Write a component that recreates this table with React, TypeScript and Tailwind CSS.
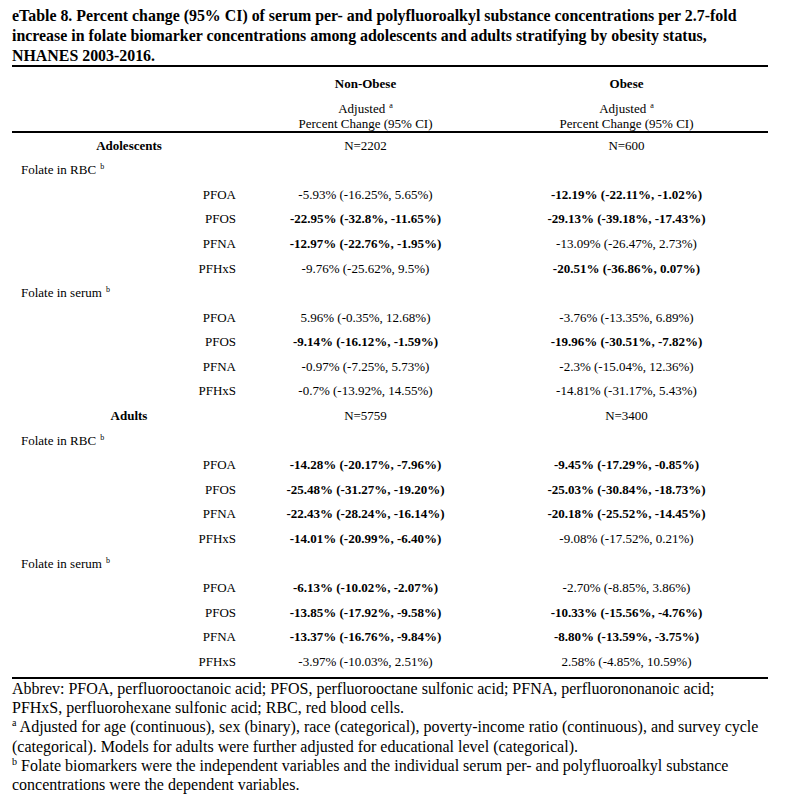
import React from "react";

type Row =
  | { kind: "group"; label: string; n1: string; n2: string }
  | { kind: "sub"; label: string }
  | { kind: "data"; label: string; v1: string; b1: boolean; v2: string; b2: boolean };

const rows: Row[] = [
  { kind: "group", label: "Adolescents", n1: "N=2202", n2: "N=600" },
  { kind: "sub", label: "Folate in RBC" },
  { kind: "data", label: "PFOA", v1: "-5.93% (-16.25%, 5.65%)", b1: false, v2: "-12.19% (-22.11%, -1.02%)", b2: true },
  { kind: "data", label: "PFOS", v1: "-22.95% (-32.8%, -11.65%)", b1: true, v2: "-29.13% (-39.18%, -17.43%)", b2: true },
  { kind: "data", label: "PFNA", v1: "-12.97% (-22.76%, -1.95%)", b1: true, v2: "-13.09% (-26.47%, 2.73%)", b2: false },
  { kind: "data", label: "PFHxS", v1: "-9.76% (-25.62%, 9.5%)", b1: false, v2: "-20.51% (-36.86%, 0.07%)", b2: true },
  { kind: "sub", label: "Folate in serum" },
  { kind: "data", label: "PFOA", v1: "5.96% (-0.35%, 12.68%)", b1: false, v2: "-3.76% (-13.35%, 6.89%)", b2: false },
  { kind: "data", label: "PFOS", v1: "-9.14% (-16.12%, -1.59%)", b1: true, v2: "-19.96% (-30.51%, -7.82%)", b2: true },
  { kind: "data", label: "PFNA", v1: "-0.97% (-7.25%, 5.73%)", b1: false, v2: "-2.3% (-15.04%, 12.36%)", b2: false },
  { kind: "data", label: "PFHxS", v1: "-0.7% (-13.92%, 14.55%)", b1: false, v2: "-14.81% (-31.17%, 5.43%)", b2: false },
  { kind: "group", label: "Adults", n1: "N=5759", n2: "N=3400" },
  { kind: "sub", label: "Folate in RBC" },
  { kind: "data", label: "PFOA", v1: "-14.28% (-20.17%, -7.96%)", b1: true, v2: "-9.45% (-17.29%, -0.85%)", b2: true },
  { kind: "data", label: "PFOS", v1: "-25.48% (-31.27%, -19.20%)", b1: true, v2: "-25.03% (-30.84%, -18.73%)", b2: true },
  { kind: "data", label: "PFNA", v1: "-22.43% (-28.24%, -16.14%)", b1: true, v2: "-20.18% (-25.52%, -14.45%)", b2: true },
  { kind: "data", label: "PFHxS", v1: "-14.01% (-20.99%, -6.40%)", b1: true, v2: "-9.08% (-17.52%, 0.21%)", b2: false },
  { kind: "sub", label: "Folate in serum" },
  { kind: "data", label: "PFOA", v1: "-6.13% (-10.02%, -2.07%)", b1: true, v2: "-2.70% (-8.85%, 3.86%)", b2: false },
  { kind: "data", label: "PFOS", v1: "-13.85% (-17.92%, -9.58%)", b1: true, v2: "-10.33% (-15.56%, -4.76%)", b2: true },
  { kind: "data", label: "PFNA", v1: "-13.37% (-16.76%, -9.84%)", b1: true, v2: "-8.80% (-13.59%, -3.75%)", b2: true },
  { kind: "data", label: "PFHxS", v1: "-3.97% (-10.03%, 2.51%)", b1: false, v2: "2.58% (-4.85%, 10.59%)", b2: false },
];

function TableRow({ row }: { row: Row }) {
  if (row.kind === "group") {
    return (
      <div className="flex h-[24.6px] items-center">
        <div className="w-[234px] text-center font-bold">{row.label}</div>
        <div className="w-[239px] text-center">{row.n1}</div>
        <div className="w-[283px] text-center">{row.n2}</div>
      </div>
    );
  }
  if (row.kind === "sub") {
    return (
      <div className="flex h-[24.6px] items-center">
        <div className="pl-[9px]">
          {row.label}
          <sup className="ml-[4px] text-[8px] relative -top-[5px]">b</sup>
        </div>
      </div>
    );
  }
  return (
    <div className="flex h-[24.6px] items-center">
      <div className="w-[224px] text-right">{row.label}</div>
      <div className="w-[10px]" />
      <div className={"w-[239px] text-center " + (row.b1 ? "font-bold" : "")}>{row.v1}</div>
      <div className={"w-[283px] text-center " + (row.b2 ? "font-bold" : "")}>{row.v2}</div>
    </div>
  );
}

export default function App() {
  return (
    <div
      className="w-[795px] h-[800px] bg-white text-black overflow-hidden"
      style={{ fontFamily: '"Liberation Serif", "Times New Roman", serif' }}
    >
      <div className="pl-[12px] pt-[6px]">
        <div className="text-[15.9px] font-bold leading-[20px]">
          <div className="whitespace-nowrap">
            eTable 8. Percent change (95% CI) of serum per- and polyfluoroalkyl substance concentrations per 2.7-fold
          </div>
          <div className="whitespace-nowrap">
            increase in folate biomarker concentrations among adolescents and adults stratifying by obesity status,
          </div>
          <div className="whitespace-nowrap">NHANES 2003-2016.</div>
        </div>
        <div className="w-[756px] text-[13px] -mt-[1px]">
          <div className="h-[2px] bg-black" />
          <div className="flex">
            <div className="w-[234px]" />
            <div className="w-[239px] flex flex-col items-center">
              <div className="h-[34px] flex items-center font-bold leading-[16px]">Non-Obese</div>
              <div className="leading-[15px]">
                Adjusted<sup className="ml-[4px] text-[8px] relative -top-[5px]">a</sup>
              </div>
              <div className="leading-[15px]">Percent Change (95% CI)</div>
            </div>
            <div className="w-[283px] flex flex-col items-center">
              <div className="h-[34px] flex items-center font-bold leading-[16px]">Obese</div>
              <div className="leading-[15px]">
                Adjusted<sup className="ml-[4px] text-[8px] relative -top-[5px]">a</sup>
              </div>
              <div className="leading-[15px]">Percent Change (95% CI)</div>
            </div>
          </div>
          <div className="h-[2px] bg-black" />
          <div className="flex flex-col">
            {rows.map((r, i) => (
              <TableRow key={i} row={r} />
            ))}
          </div>
          <div className="h-[3px]" />
          <div className="h-[2px] bg-black" />
        </div>
        <div className="text-[16px] leading-[19.2px] pt-[0px]">
          <div className="whitespace-nowrap">
            Abbrev: PFOA, perfluorooctanoic acid; PFOS, perfluorooctane sulfonic acid; PFNA, perfluorononanoic acid;
          </div>
          <div className="whitespace-nowrap">
            PFHxS, perfluorohexane sulfonic acid; RBC, red blood cells.
          </div>
          <div className="whitespace-nowrap">
            <sup className="text-[10px] relative -top-[6px]">a</sup> Adjusted for age (continuous), sex (binary), race
            (categorical), poverty-income ratio (continuous), and survey cycle
          </div>
          <div className="whitespace-nowrap">
            (categorical). Models for adults were further adjusted for educational level (categorical).
          </div>
          <div className="whitespace-nowrap">
            <sup className="text-[10px] relative -top-[6px]">b</sup> Folate biomarkers were the independent variables and
            the individual serum per- and polyfluoroalkyl substance
          </div>
          <div className="whitespace-nowrap">concentrations were the dependent variables.</div>
        </div>
      </div>
    </div>
  );
}
